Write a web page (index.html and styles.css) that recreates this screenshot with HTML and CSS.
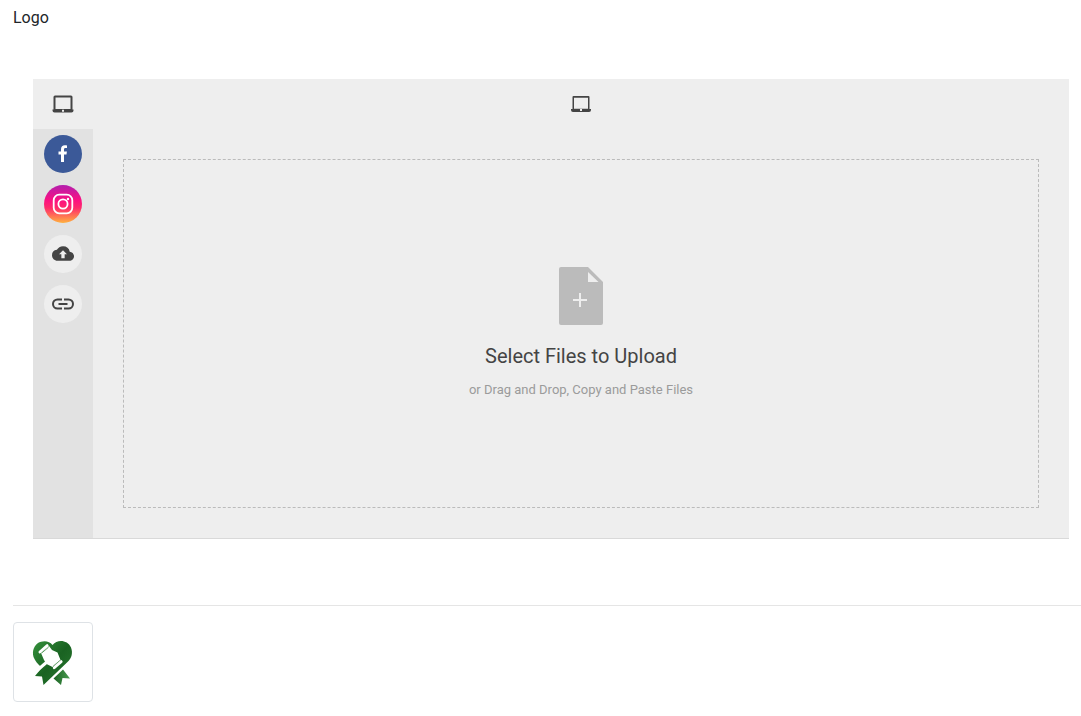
FILE: index.html
```
<!DOCTYPE html>
<html lang="en">

<head>
    <meta charset="UTF-8">
    <meta name="viewport" content="width=device-width, initial-scale=1.0">
    <title>Logo</title>
    <link rel="stylesheet" href="styles.css">
</head>

<body>
    <label class="field-label" for="logo-file">Logo</label>

    <div class="picker">
        <nav class="sources">
            <button type="button" class="source active" aria-label="My Device">
                <svg class="device-icon" viewBox="0 0 22 18">
                    <path fill-rule="evenodd" d="M3 .5h16a1.500 1.500 0 0 1 1.500 1.500v12.500h1v1a2 2 0 0 1-2 2h-17a2 2 0 0 1-2-2v-1h1V2A1.500 1.500 0 0 1 3 .5zM3.500 2.500v11.500h15v-11.500zM10 14.800v2h2v-2z" />
                </svg>
            </button>
            <button type="button" class="source" aria-label="Facebook">
                <span class="circle facebook">
                    <svg viewBox="0 0 38 38">
                        <path fill="#fff" d="M17 27v-7.500h-2.500v-3H17v-2.300c0-2.500 1.500-3.900 3.800-3.900 1 0 1.700.1 2.200.2v2.600h-1.500c-1.200 0-1.500.6-1.500 1.500v1.900h2.900l-.4 3H20V27z" />
                    </svg>
                </span>
            </button>
            <button type="button" class="source" aria-label="Instagram">
                <span class="circle instagram">
                    <svg viewBox="0 0 38 38" fill="none" stroke="#fff" stroke-width="1.800">
                        <rect x="9.700" y="9.700" width="18.600" height="18.600" rx="5.500" />
                        <circle cx="19" cy="19" r="4.600" />
                        <circle cx="24" cy="14" r="1.200" fill="#fff" stroke="none" />
                    </svg>
                </span>
            </button>
            <button type="button" class="source" aria-label="Files uploaded">
                <span class="circle">
                    <svg viewBox="0 0 38 38">
                        <path transform="translate(8 7.500) scale(.917)" d="M19.350 10.040A7.490 7.490 0 0 0 12 4C9.110 4 6.600 5.640 5.350 8.040A5.994 5.994 0 0 0 0 14c0 3.310 2.690 6 6 6h13c2.760 0 5-2.240 5-5 0-2.640-2.050-4.780-4.650-4.960zM13.800 12.800v4.400h-3.600v-4.400H7.700L12 8.500l4.300 4.300z" />
                    </svg>
                </span>
            </button>
            <button type="button" class="source" aria-label="Direct Link">
                <span class="circle">
                    <svg viewBox="0 0 38 38" fill="none" stroke="#444" stroke-width="2">
                        <path d="M18 14.500h-4.500a4.500 4.500 0 0 0 0 9H18M20 14.500h4.500a4.500 4.500 0 0 1 0 9H20M14.500 19h9" />
                    </svg>
                </span>
            </button>
        </nav>

        <div class="content">
            <div class="content-header">
                <svg class="device-icon small" viewBox="0 0 20 16">
                    <path fill-rule="evenodd" d="M2.500 0h15a1 1 0 0 1 1 1v12H20v1a2 2 0 0 1-2 2H2a2 2 0 0 1-2-2v-1h1.500V1a1 1 0 0 1 1-1zM3 1.700v11h14v-11zM9 13v2h2v-2z" />
                </svg>
            </div>
            <label class="dropzone" for="logo-file">
                <svg class="file-icon" viewBox="0 0 44 58">
                    <path d="M2 0h27l15 15v41a2 2 0 0 1-2 2H2a2 2 0 0 1-2-2V2a2 2 0 0 1 2-2z" fill="#bbb" />
                    <path d="M29 5v10h10.500zM20 26h2v6h6v2h-6v6h-2v-6h-6v-2h6z" fill="#eee" />
                </svg>
                <span class="title">Select Files to Upload</span>
                <span class="subtitle">or Drag and Drop, Copy and Paste Files</span>
            </label>
            <input type="file" id="logo-file" class="file-input">
        </div>
    </div>

    <hr>

    <div class="thumbnail">
        <svg viewBox="0 0 50 55" role="img" aria-label="Current logo">
            <defs>
                <linearGradient id="green" x1="0" y1="0" x2="1" y2="1">
                    <stop offset="0" stop-color="#35913c" />
                    <stop offset=".5" stop-color="#1a6322" />
                    <stop offset="1" stop-color="#2a7a31" />
                </linearGradient>
                <linearGradient id="ribbon" x1="0" y1="0" x2="1" y2="0">
                    <stop offset="0" stop-color="#1a6322" />
                    <stop offset="1" stop-color="#4a9a50" />
                </linearGradient>
            </defs>
            <path fill="url(#green)" d="M24.500 10C21 5 14 5.500 10 8c-5 3.500-6.500 10.500-3.500 16 1.200 2.500 3 4.500 5 6.500l2.500 2L7 41l7 .5 1.500 8.500L39.500 27c4.500-4 5.500-9.500 3.500-14.500C39.500 5 29.500 4 24.500 10z" />
            <path fill="url(#ribbon)" d="M35 34.500l7 9-7.500-.5L33 50l-7.500-6.500z" />
            <path fill="#fff" d="M13 18l8-7 3 4 5.500 2.500 3 7.500-8 7-6-3-2.500-4z" />
            <path d="M19.500 26.500L9 35.500" stroke="#fff" stroke-width="3" />
            <path d="M13.500 18.200l7-6M25.200 31.200l6.600-5.600" fill="none" stroke="#5c9c61" stroke-width="1" />
            <path d="M11.900 17l7.300-6.400M26.200 32.800l7-6.200" fill="none" stroke="#fff" stroke-width="2.800" stroke-linecap="round" />
        </svg>
    </div>
</body>

</html>
```

FILE: styles.css
```
* {
    box-sizing: border-box;
}

body {
    margin: 0;
    padding: 6px 0 14px 13px;
    font-family: Roboto, Arial, sans-serif;
    background-color: #fff;
    color: #212529;
}

svg {
    display: block;
}

.field-label {
    display: block;
    font-size: 16px;
    line-height: 24px;
}

.picker {
    display: flex;
    min-height: 460px;
    margin: 49px 12px 66px 20px;
    background-color: #eee;
    border-bottom: 1px solid #d9d9d9;
}

.sources {
    width: 60px;
    background-color: #e2e2e2;
}

.source {
    display: flex;
    align-items: center;
    justify-content: center;
    width: 100%;
    height: 50px;
    padding: 0;
    border: none;
    background: none;
    cursor: pointer;
}

.source.active {
    background-color: #eee;
}

.circle {
    width: 38px;
    height: 38px;
    border-radius: 50%;
    background-color: #eee;
    fill: #444;
}

.facebook {
    background-color: #3b5998;
}

.instagram {
    background: linear-gradient(#b21fae 0%, #fb1181 40%, #fe2a6c 60%, #ffb13f 100%);
}

.device-icon {
    width: 22px;
    height: 18px;
    fill: #444;
}

.device-icon.small {
    width: 20px;
    height: 16px;
}

.content {
    flex: 1;
    display: flex;
    flex-direction: column;
    padding: 0 30px 30px;
}

.content-header {
    display: flex;
    align-items: center;
    justify-content: center;
    height: 50px;
    margin-bottom: 30px;
}

.dropzone {
    flex: 1;
    display: flex;
    flex-direction: column;
    align-items: center;
    justify-content: center;
    border: 1px dashed #bbb;
    cursor: pointer;
}

.file-icon {
    width: 44px;
    height: 58px;
    margin-bottom: 16px;
}

.title {
    font-size: 20px;
    line-height: 30px;
    color: #444;
}

.subtitle {
    margin-top: 9px;
    font-size: 13px;
    line-height: 20px;
    color: #9b9b9b;
}

.file-input {
    display: none;
}

hr {
    height: 1px;
    margin: 0 0 16px;
    border: none;
    background-color: #e5e5e5;
}

.thumbnail {
    display: flex;
    align-items: center;
    justify-content: center;
    width: 80px;
    height: 80px;
    border: 1px solid #dee2e6;
    border-radius: 4px;
}

.thumbnail svg {
    width: 50px;
    height: 55px;
}
```
